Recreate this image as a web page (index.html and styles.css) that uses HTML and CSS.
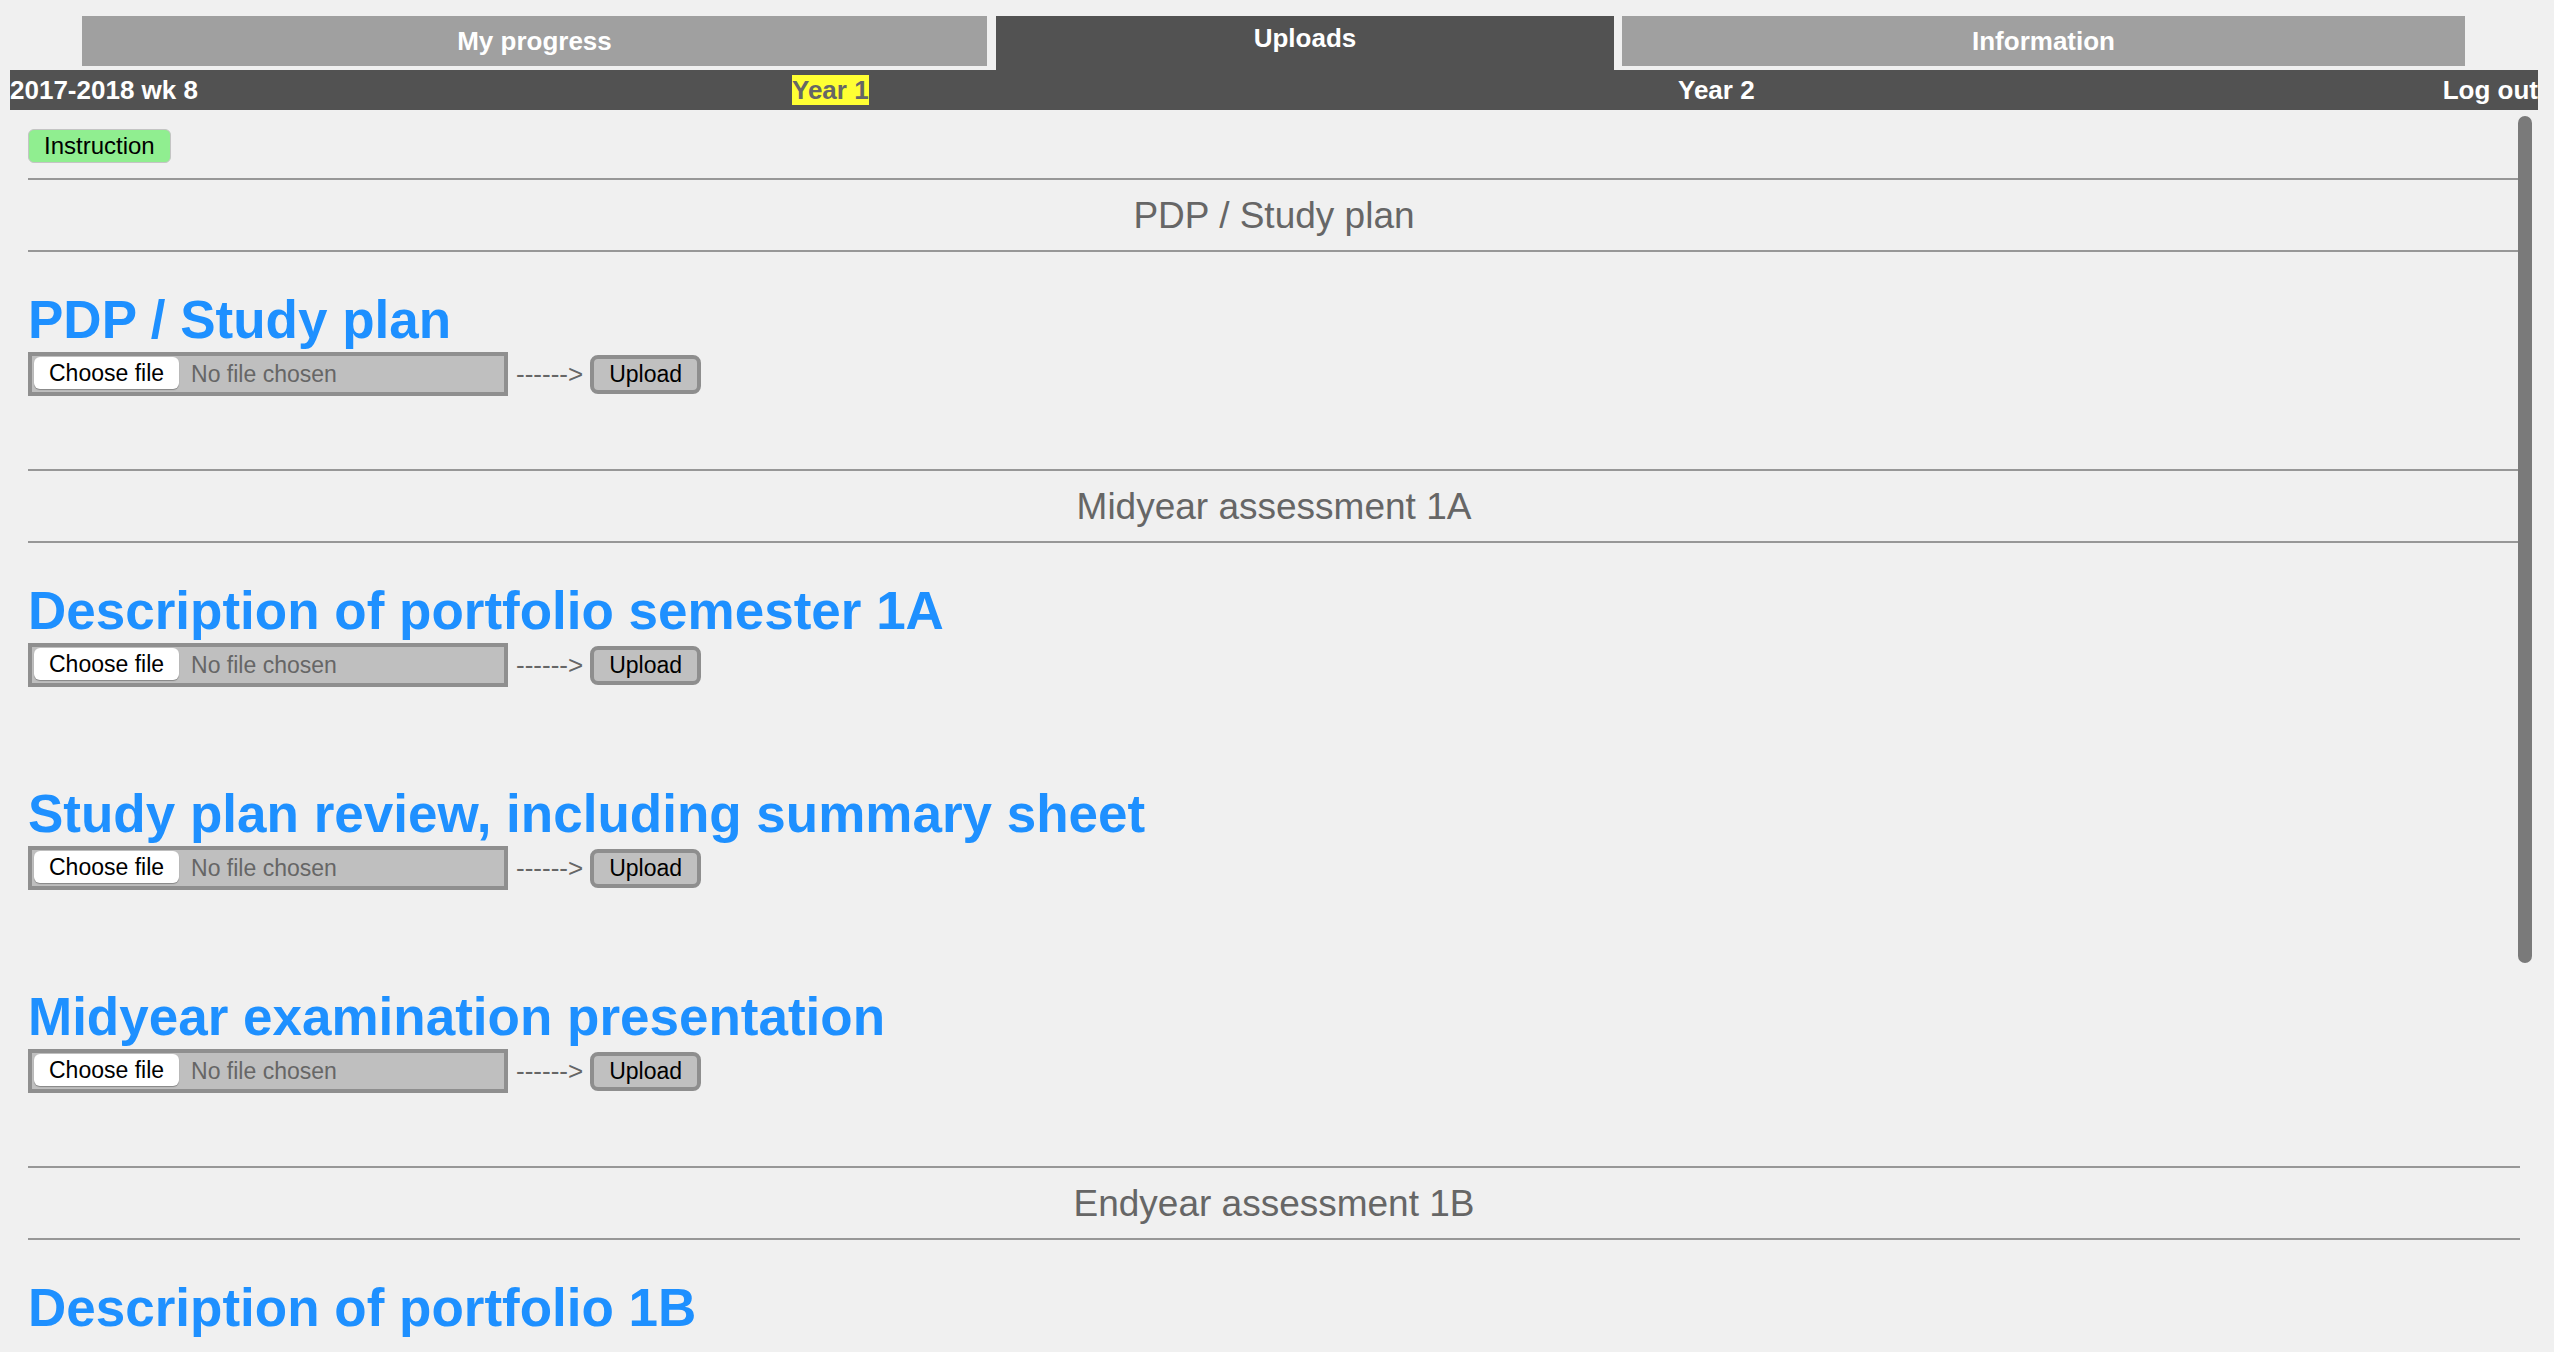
FILE: index.html
```html
<!DOCTYPE html>
<html lang="en">
<head>
<meta charset="utf-8">
<title>Uploads</title>
<link rel="stylesheet" href="styles.css">
</head>
<body>
<nav class="tabs">
  <div class="tab tab-progress">My progress</div>
  <div class="tab tab-uploads">Uploads</div>
  <div class="tab tab-info">Information</div>
</nav>
<div class="bar">
  <div class="bar-item">2017-2018 wk 8</div>
  <div class="bar-item"><span class="year-current">Year 1</span></div>
  <div class="bar-item">Year 2</div>
  <div class="bar-item">Log out</div>
</div>
<main class="main">
  <button class="instruction-btn">Instruction</button>

  <section class="section">
    <div class="section-title">PDP / Study plan</div>
    <div class="item">
      <h1 class="item-title">PDP / Study plan</h1>
      <div class="file-row">
        <div class="file-input"><span class="choose-btn">Choose file</span><span class="no-file">No file chosen</span></div>
        <span class="arrow">------&gt;</span>
        <button class="upload-btn">Upload</button>
      </div>
    </div>
  </section>

  <section class="section">
    <div class="section-title">Midyear assessment 1A</div>
    <div class="item">
      <h1 class="item-title">Description of portfolio semester 1A</h1>
      <div class="file-row">
        <div class="file-input"><span class="choose-btn">Choose file</span><span class="no-file">No file chosen</span></div>
        <span class="arrow">------&gt;</span>
        <button class="upload-btn">Upload</button>
      </div>
    </div>
    <div class="item">
      <h1 class="item-title">Study plan review, including summary sheet</h1>
      <div class="file-row">
        <div class="file-input"><span class="choose-btn">Choose file</span><span class="no-file">No file chosen</span></div>
        <span class="arrow">------&gt;</span>
        <button class="upload-btn">Upload</button>
      </div>
    </div>
    <div class="item">
      <h1 class="item-title">Midyear examination presentation</h1>
      <div class="file-row">
        <div class="file-input"><span class="choose-btn">Choose file</span><span class="no-file">No file chosen</span></div>
        <span class="arrow">------&gt;</span>
        <button class="upload-btn">Upload</button>
      </div>
    </div>
  </section>

  <section class="section">
    <div class="section-title">Endyear assessment 1B</div>
    <div class="item">
      <h1 class="item-title">Description of portfolio 1B</h1>
    </div>
  </section>

  <div class="scroll-thumb"></div>
</main>
</body>
</html>
```
FILE: styles.css
```css
html, body {
  margin: 0;
  padding: 0;
  background: #f0f0f0;
  font-family: "Liberation Sans", Arial, Helvetica, sans-serif;
  overflow: hidden;
}

/* ---------- top tabs ---------- */
.tabs {
  display: flex;
  align-items: flex-start;
  padding: 16px 0 0 82px;
  height: 54px;
}
.tab {
  height: 50px;
  line-height: 50px;
  text-align: center;
  color: #fff;
  font-weight: bold;
  font-size: 26px;
  background: #a0a0a0;
}
.tab-progress { width: 905px; margin-right: 9px; }
.tab-uploads {
  width: 618px;
  height: 54px;
  line-height: 44px;
  background: #525252;
  margin-right: 8px;
}
.tab-info { width: 843px; }

/* ---------- dark bar ---------- */
.bar {
  margin: 0 16px 0 10px;
  height: 40px;
  background: #525252;
  display: grid;
  grid-template-columns: 782px 886px 1fr auto;
  line-height: 40px;
  color: #fff;
  font-weight: bold;
  font-size: 26px;
  white-space: nowrap;
}
.year-current {
  background: #ffff33;
  color: #666;
}

/* ---------- content ---------- */
.main {
  position: relative;
  display: block;
  margin: 0 16px 0 10px;
  padding: 19px 18px 0;
  height: calc(100vh - 110px);
  box-sizing: border-box;
  overflow: hidden;
}

.instruction-btn {
  display: block;
  margin: 0;
  height: 34px;
  padding: 0 15px;
  font-family: "Liberation Sans", Arial, sans-serif;
  font-size: 24px;
  color: #000;
  background: #90ee90;
  border: 1px solid #c4c4c4;
  border-radius: 6px;
}

.section {
  padding-bottom: 73px;
}
.instruction-btn + .section {
  margin-top: 15px;
}

.section-title {
  border-top: 2px solid #979797;
  border-bottom: 2px solid #979797;
  height: 55px;
  padding-top: 15px;
  line-height: 42px;
  text-align: center;
  font-size: 37px;
  color: #666;
}

.item {
  padding-top: 37px;
}
.item + .item {
  padding-top: 96px;
}

.item-title {
  margin: 0;
  font-size: 53px;
  line-height: 62px;
  font-weight: bold;
  color: #1e90ff;
  white-space: nowrap;
}

.file-row {
  display: flex;
  align-items: center;
  height: 44px;
  margin-top: 1px;
}

.file-input {
  width: 480px;
  height: 44px;
  box-sizing: border-box;
  border: 4px solid #8f8f8f;
  background: #bfbfbf;
  display: flex;
  align-items: center;
  padding: 0 2px;
}
.choose-btn {
  display: flex;
  align-items: center;
  height: 32px;
  margin-top: -2px;
  padding: 0 15px;
  background: #fff;
  border-radius: 6px;
  box-shadow: 0 1px 1px rgba(0, 0, 0, 0.3);
  font-size: 23px;
  color: #000;
}
.no-file {
  margin-left: 12px;
  font-size: 23px;
  color: #666;
}

.arrow {
  margin-left: 8px;
  font-size: 26px;
  color: #666;
}

.upload-btn {
  margin: 0 0 0 7px;
  height: 39px;
  padding: 0 15px;
  font-family: "Liberation Sans", Arial, sans-serif;
  font-size: 23px;
  color: #000;
  background: #c0c0c0;
  border: 4px solid #8e8e8e;
  border-radius: 8px;
}

.scroll-thumb {
  position: absolute;
  top: 6px;
  right: 6px;
  width: 14px;
  height: 847px;
  border-radius: 7px;
  background: #7a7a7a;
}
```
